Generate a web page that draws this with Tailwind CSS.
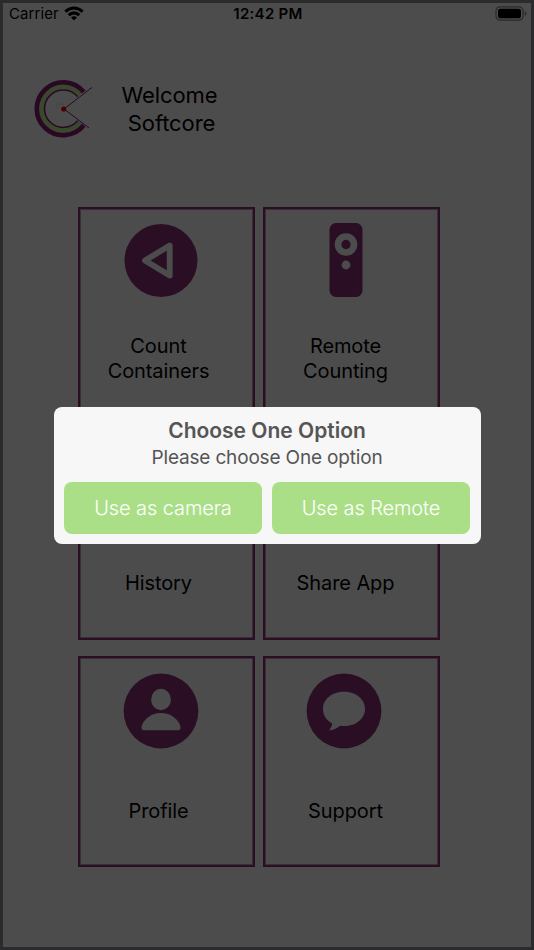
<!DOCTYPE html>
<html lang="en">
<head>
<meta charset="utf-8">
<title>Welcome</title>
<script src="https://cdn.jsdelivr.net/npm/@tailwindcss/browser@4"></script>
</head>
<body class="w-[534px] h-[950px] overflow-hidden font-['Inter',sans-serif] text-black">
<div class="relative w-[534px] h-[950px] border-[3px] border-[#2b2b2d] bg-white flex flex-col">
  <header class="h-[22px] grid grid-cols-3 items-center pl-[6px] pr-[4px]">
    <div class="flex items-center gap-[5px] text-[15px] leading-[22px] tracking-[0.1px]">
      <span>Carrier</span>
      <svg class="w-[20px] h-[15px] -mt-[2px]" viewBox="0 0 20 15"><path d="M0.3 4.6Q10-3.8 19.7 4.6L17.6 6.8Q10 0.4 2.4 6.8ZM3.6 8Q10 2.4 16.4 8L14.2 10.2Q10 6.6 5.8 10.2ZM7 11.4Q10 8.9 13 11.4L10 14.5Z"/></svg>
    </div>
    <div class="text-center text-[15px] leading-[22px] tracking-[0.3px] font-semibold whitespace-nowrap">12:42 PM</div>
    <svg class="justify-self-end w-[32px] h-[15px] -mt-[2px]" viewBox="0 0 32 15"><rect x="1" y=".8" width="27" height="13.4" rx="4" fill="none" stroke="#000" stroke-opacity=".45" stroke-width="1.2"/><rect x="3" y="2.7" width="23" height="9.6" rx="2.2"/><path d="M29.7 5v5q1.700-.8 1.700-2.500t-1.700-2.500" fill-opacity=".45"/></svg>
  </header>

  <div class="flex items-start mt-[51px] ml-[29px] h-[64px]">
    <svg class="w-[62px] h-[64px] shrink-0" viewBox="32 76 62 64" fill="none">
      <path d="M83.600 92.200A26.200 26.200 0 1 0 83.600 125.200" stroke="#8c1d78" stroke-width="5.200"/>
      <path d="M79.900 94.900A21.600 21.600 0 1 0 79.900 122.500" stroke="#c2f297" stroke-width="5"/>
      <path d="M77.600 96.700A18.700 18.700 0 1 0 77.600 120.700" stroke="#8c1d78" stroke-width="1.500"/>
      <path d="M57 109V104H64" stroke="#ddd" stroke-width=".8"/>
      <path d="M92 87.400L64 109L89 128" stroke="#8c1d78" stroke-width="1"/>
      <circle cx="63.700" cy="109" r="2.600" fill="#f00"/>
    </svg>
    <div class="ml-[22px] mt-[6px] w-[107px] text-center text-[22px] leading-[27.5px] tracking-[-0.1px]">
      <p>Welcome</p>
      <p class="pl-[4px]">Softcore</p>
    </div>
  </div>

  <main class="ml-[75px] mt-[67px] grid grid-cols-[177px_177px] gap-x-[8px] text-[20px] leading-[24.5px] tracking-[-0.1px] text-center">
    <section class="h-[209px] border-2 border-[#8c357b] shadow-[inset_0_0_0_1px_#c59abd] flex flex-col items-center pr-[16px]">
      <svg class="mt-[13px] w-[76px] h-[76px] ml-[5px]" viewBox="0 0 76 76"><circle cx="38" cy="38.500" r="36.500" fill="#8c357b"/><path d="M22 38.500L46.700 23.500V53.500Z" fill="none" stroke="#fff" stroke-width="5.800" stroke-linejoin="round"/></svg>
      <p class="mt-[36px]">Count<br>Containers</p>
    </section>
    <section class="h-[209px] border-2 border-[#8c357b] shadow-[inset_0_0_0_1px_#c59abd] flex flex-col items-center pr-[12px]">
      <svg class="mt-[13px] w-[76px] h-[76px]" viewBox="0 0 76 76"><rect x="21.500" y="1" width="33" height="74" rx="6.500" fill="#8c357b"/><circle cx="38" cy="22.500" r="8" fill="none" stroke="#fff" stroke-width="6.600"/><circle cx="38" cy="43" r="4.400" fill="#fff"/></svg>
      <p class="mt-[36px]">Remote<br>Counting</p>
    </section>
    <section class="mt-[15px] h-[209px] border-2 border-[#8c357b] shadow-[inset_0_0_0_1px_#c59abd] flex flex-col items-center pr-[16px]">
      <svg class="mt-[14px] w-[76px] h-[76px]" viewBox="0 0 76 76"><circle cx="38" cy="38" r="37" fill="#8c357b"/></svg>
      <p class="mt-[48px]">History</p>
    </section>
    <section class="mt-[15px] h-[209px] border-2 border-[#8c357b] shadow-[inset_0_0_0_1px_#c59abd] flex flex-col items-center pr-[12px]">
      <svg class="mt-[14px] w-[76px] h-[76px]" viewBox="0 0 76 76"><circle cx="38" cy="38" r="37" fill="#8c357b"/></svg>
      <p class="mt-[48px]">Share App</p>
    </section>
    <section class="mt-[16px] h-[211px] border-2 border-[#8c357b] shadow-[inset_0_0_0_1px_#c59abd] flex flex-col items-center pr-[16px]">
      <svg class="mt-[15px] w-[76px] h-[76px] ml-[5px]" viewBox="0 0 76 76"><circle cx="38" cy="38" r="37.400" fill="#8c357b"/><ellipse cx="38" cy="26.500" rx="9.900" ry="10.700" fill="#fff"/><path d="M38 40C48.500 40 57 48 57.500 54.500Q57.500 57.200 55 57.200H21Q18.500 57.200 18.500 54.500C19 48 27.500 40 38 40Z" fill="#fff"/></svg>
      <p class="mt-[50px]">Profile</p>
    </section>
    <section class="mt-[16px] h-[211px] border-2 border-[#8c357b] shadow-[inset_0_0_0_1px_#c59abd] flex flex-col items-center pr-[12px]">
      <svg class="mt-[15px] w-[76px] h-[76px] mr-[4px]" viewBox="0 0 76 76"><circle cx="38" cy="38" r="37.400" fill="#8c357b"/><path d="M38 18.700C49.700 18.700 59 26 59 35.900S49.700 53 38 53Q36 53 34.500 52.700C31 54.800 28 57.200 23.800 57.200C23 56.600 26.400 53.600 26.200 50.300C20.500 47.200 17 42.200 17 35.900C17 26 26.300 18.700 38 18.700Z" fill="#fff"/></svg>
      <p class="mt-[50px]">Support</p>
    </section>
  </main>

  <div class="absolute inset-0 bg-black/70 flex justify-center items-start pt-[403.5px]">
    <div role="dialog" class="w-[427px] h-[137.5px] rounded-[8px] bg-[#f7f7f7] px-[10.5px] pt-[10px] text-center text-[#555]">
      <h1 class="text-[21px] leading-[28px] font-semibold">Choose One Option</h1>
      <p class="text-[19px] leading-[26px] tracking-[-0.17px]">Please choose One option</p>
      <div class="mt-[11.5px] grid grid-cols-2 gap-[10px] text-[20px] tracking-[-0.1px] text-white">
        <button class="h-[51.5px] rounded-[8px] bg-[#abdf87] font-light">Use as camera</button>
        <button class="h-[51.5px] rounded-[8px] bg-[#abdf87] font-light">Use as Remote</button>
      </div>
    </div>
  </div>
</div>
</body>
</html>
